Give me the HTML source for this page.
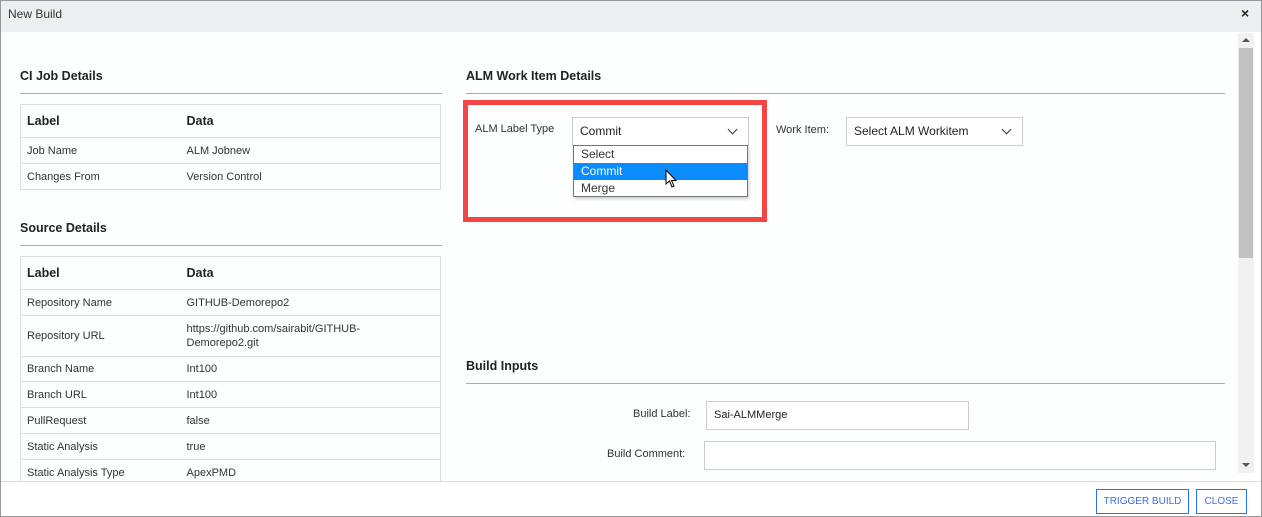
<!DOCTYPE html><html><head><style>
*{margin:0;padding:0;box-sizing:border-box}
body{width:1262px;height:517px;overflow:hidden;background:#fff;font-family:"Liberation Sans",sans-serif;font-size:11px;color:#333;position:relative}
.a{position:absolute}
.h{font-weight:bold;font-size:12.5px;color:#222}
.ln{position:absolute;height:1px;background:#aaa}
table{position:absolute;border-collapse:collapse;width:421px;left:20px;border:1px solid #ddd}
td{border-top:1px solid #ddd;padding:0 6px;font-size:11px;color:#333;vertical-align:middle}
td:first-child{width:160px}
tr.th td{font-weight:bold;font-size:12.5px;color:#222}
.sel{position:absolute;border:1px solid #ccc;background:#fff;font-size:12px;color:#222;padding:0 7px;line-height:26px}
.chev{position:absolute;right:12px;top:8px;width:7px;height:7px;border-right:1.5px solid #333;border-bottom:1.5px solid #333;transform:rotate(45deg)}
.btn{position:absolute;border:1.5px solid #2a6fff;color:#3a6fe0;font-size:10px;text-align:center;line-height:23px}
</style></head><body>
<div class="a" style="left:0;top:0;width:1262px;height:517px;border:1px solid #999"></div>
<div class="a" style="left:1px;top:1px;width:1260px;height:31px;background:#eceef0"></div>
<div class="a" style="left:8px;top:7px;font-size:12px;color:#333">New Build</div>
<div class="a" style="left:1241px;top:5px;font-size:14px;font-weight:bold;color:#222">×</div>
<div class="a" style="left:1px;top:32px;width:1236px;height:449px;background:#fdfefe;overflow:hidden">
<div class="a" style="left:-1px;top:-32px;width:1262px;height:517px">

<div class="a h" style="left:20px;top:69px">CI Job Details</div>
<div class="ln" style="left:20px;top:93px;width:422px"></div>
<table style="top:104px">
<tr class="th" style="height:33px"><td>Label</td><td>Data</td></tr>
<tr style="height:26px"><td>Job Name</td><td>ALM Jobnew</td></tr>
<tr style="height:26px"><td>Changes From</td><td>Version Control</td></tr>
</table>

<div class="a h" style="left:20px;top:221px">Source Details</div>
<div class="ln" style="left:20px;top:245px;width:422px"></div>
<table style="top:256px">
<tr class="th" style="height:33px"><td>Label</td><td>Data</td></tr>
<tr style="height:26px"><td>Repository Name</td><td>GITHUB-Demorepo2</td></tr>
<tr style="height:41px"><td>Repository URL</td><td style="line-height:14px">https://github.com/sairabit/GITHUB-<br>Demorepo2.git</td></tr>
<tr style="height:25px"><td>Branch Name</td><td>Int100</td></tr>
<tr style="height:26px"><td>Branch URL</td><td>Int100</td></tr>
<tr style="height:26px"><td>PullRequest</td><td>false</td></tr>
<tr style="height:26px"><td>Static Analysis</td><td>true</td></tr>
<tr style="height:26px"><td>Static Analysis Type</td><td>ApexPMD</td></tr>
</table>

<div class="a h" style="left:466px;top:69px">ALM Work Item Details</div>
<div class="ln" style="left:466px;top:93px;width:759px"></div>
<div class="a" style="left:463px;top:100px;width:304px;height:122px;border:5px solid #f44444"></div>
<div class="a" style="left:475px;top:123px;font-size:11px">ALM Label Type</div>
<div class="sel" style="left:572px;top:117px;width:177px;height:29px">Commit<div class="chev"></div></div>
<div class="a" style="left:573px;top:145px;width:175px;height:52px;border:1px solid #777;background:#fff;box-shadow:1px 2px 3px rgba(0,0,0,.2);font-size:12px;line-height:17px">
<div style="padding-left:7px">Select</div><div style="padding-left:7px;background:#0a8cff;color:#fff">Commit</div><div style="padding-left:7px">Merge</div></div>
<svg class="a" style="left:665px;top:169px" width="13" height="20" viewBox="0 0 13 20"><path d="M1 1 L1 15 L4.5 12 L7 18 L9 17 L6.5 11.5 L11 11.5 Z" fill="#fff" stroke="#000" stroke-width="1"/></svg>
<div class="a" style="left:776px;top:124px;font-size:11px">Work Item:</div>
<div class="sel" style="left:846px;top:117px;width:177px;height:29px">Select ALM Workitem<div class="chev"></div></div>

<div class="a h" style="left:466px;top:359px">Build Inputs</div>
<div class="ln" style="left:466px;top:383px;width:759px"></div>
<div class="a" style="left:633px;top:408px">Build Label:</div>
<div class="sel" style="left:706px;top:401px;width:263px;height:29px;font-size:11px">Sai-ALMMerge</div>
<div class="a" style="left:607px;top:448px">Build Comment:</div>
<div class="sel" style="left:704px;top:441px;width:512px;height:29px"></div>
</div></div>

<div class="a" style="left:1238px;top:33px;width:16px;height:440px;background:#f1f1f1"></div>
<div class="a" style="left:1239px;top:48px;width:14px;height:210px;background:#c1c1c1"></div>
<div class="a" style="left:1242px;top:38px;border-left:4px solid transparent;border-right:4px solid transparent;border-bottom:4px solid #555"></div>
<div class="a" style="left:1242px;top:463px;border-left:4px solid transparent;border-right:4px solid transparent;border-top:4px solid #555"></div>

<div class="ln" style="left:1px;top:481px;width:1260px;background:#ddd"></div>
<div class="btn" style="left:1096px;top:489px;width:93px;height:25px">TRIGGER BUILD</div>
<div class="btn" style="left:1196px;top:489px;width:51px;height:25px">CLOSE</div>
</body></html>
